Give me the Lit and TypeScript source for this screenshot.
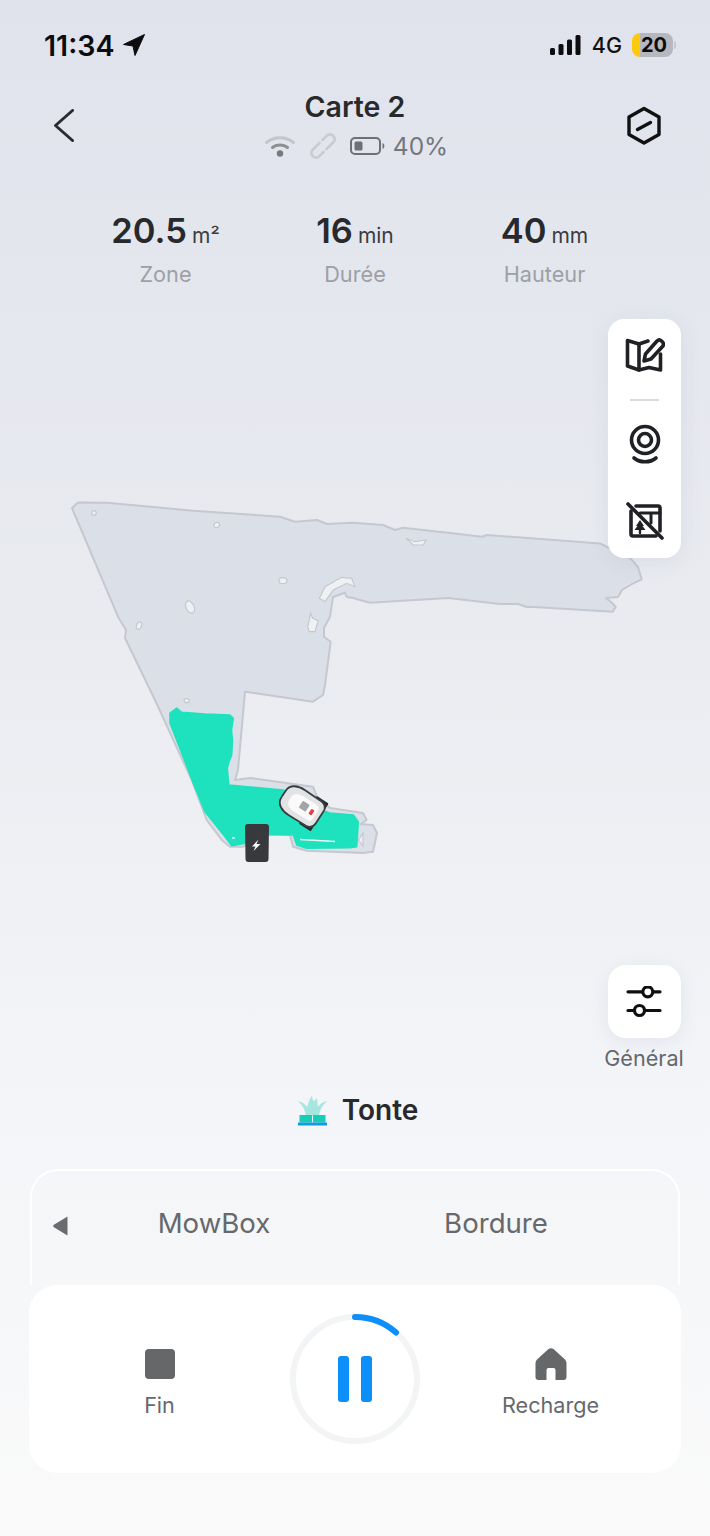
import { LitElement, html, css, svg } from "lit";
import { customElement } from "lit/decorators.js";

const outline = "M72 508 L78 502.5 L107 502.7 L193 510.7 L280 516.7 L295 521.7 L317 520 L327 524 L353 522.7 L383 525 L395 530 L403 527.7 L450 533 L482 536.7 L487 535 L600 543.5 L630 558 L638 567 L641.7 579.3 L632 584 L622 590 L618 597 L606 598 L612 603 L615.7 607 L612.7 611.7 L530 606.7 L526.7 607 L518 604 L500 604 L448 598 L370 602.7 L353 598 L346.7 597 L345 592.7 L333 597 L330 616.7 L324 628 L324 636.7 L330.7 641.7 L325 685 L323 695 L313 701.7 L245 691.7 L238 770 L235 780 L250 778 L313 786.7 L317 796.7 L330 808 L363 813 L366.7 820 L360.7 824 L373 825 L377 833 L373 851.7 L363 853 L306.7 850.7 L293 846.7 L290 835 L268 835 L243 846.7 L230 846.7 L221.7 840 L206.7 820 L191.7 780 L155 700 L125 638 L126 630 L118 616.7 Z";

const green = "M170 713 L176.7 708 L181.7 712.3 L205 714 L230 715 L233.3 718.3 L231.5 730 L232.5 740 L231.7 755 L229 762 L227.3 768.3 L228 776 L229 785 L283 790 L310 806 L330 813 L353.3 815 L358.3 821.7 L357.5 835 L356.7 846.7 L350 847.7 L306.7 848.3 L296.7 845 L293.3 835 L270 834.3 L246.7 843 L231.7 845.7 L225 836.7 L205 811.7 L193.3 783.3 L188.3 770 L170 723.3 Z";

const mapArt = svg`
  <path class="land" d=${outline}></path>
  <g class="hole">
    <ellipse cx="94" cy="513" rx="2.2" ry="2.4"></ellipse>
    <ellipse cx="216.7" cy="525" rx="3" ry="2.4" transform="rotate(-25 216.7 525)"></ellipse>
    <ellipse cx="283" cy="580.7" rx="4" ry="3"></ellipse>
    <ellipse cx="190" cy="607" rx="4" ry="6.5" transform="rotate(-25 190 607)"></ellipse>
    <ellipse cx="139" cy="625.7" rx="2.5" ry="3.8" transform="rotate(20 139 625.7)"></ellipse>
    <ellipse cx="186.7" cy="700.7" rx="2.6" ry="2"></ellipse>
    <path d="M319.3 598.3 L325 586.7 L341.7 577.3 L351.7 578.3 L355 586.7 L346.7 583.3 L333.3 590 L325 601.7 Z"></path>
    <path d="M310.7 613.3 L312.7 618.3 L318.3 620.7 L315 631.7 L309.3 631.7 L307.7 626.7 Z"></path>
    <path d="M406 538.3 L415 541.7 L426 540 L423.3 545 L413.3 545 Z"></path>
    <path d="M358.5 840 L363 833 L363 846 Z"></path>
  </g>
  <path class="mown" d=${green}></path>
  <path class="sliver" d="M300 839.5 L335 841.5"></path>
  <path class="sliver" d="M232 838 L235 838"></path>
  <g transform="translate(302 806) rotate(33)">
    <rect x="7" y="-16.5" width="14" height="33" rx="1" fill="#26282b"></rect>
    <path d="M-22 -4 C-22 -12 -14 -15 -6 -15 L14 -14.5 C19 -14 21 -11 21 -7 V7 C21 11 19 14 14 14.5 L-6 15 C-14 15 -22 12 -22 4 Z" fill="#e2e3e4" stroke="#3b3d40" stroke-width="1.8"></path>
    <path d="M-14 -2 C-14 -7 -9 -9 -4 -9 L12 -9 C15 -9 16 -7 16 -5 V5 C16 7 15 9 12 9 L-4 9 C-9 9 -14 7 -14 2 Z" fill="#fafafa"></path>
    <rect x="-2" y="-5" width="8" height="8" rx="1" fill="#a2a4a8"></rect>
    <rect x="9.5" y="-3" width="3.5" height="6" rx="1" fill="#e5403f"></rect>
  </g>
  <path d="M245 827 Q245 824 248 824 L266 824 Q269 824 269 827 L268.5 859 Q268.5 862 265.5 862 L248.5 862 Q245.5 862 245.5 859 Z" fill="#38393c"></path>
  <path d="M258.5 839.5 L252 846.5 L255.5 846.5 L253.5 851 L260.5 844 L256.5 844 Z" fill="#fff"></path>
`;

@customElement("app-root")
export class AppRoot extends LitElement {
  static styles = css`
    :host {
      display: flex;
      flex-direction: column;
      width: 710px;
      height: 1536px;
      overflow: hidden;
      font-family: Inter, "Liberation Sans", sans-serif;
      background: linear-gradient(180deg, #e0e3ec 0%, #e9ebf0 40%, #f3f5f8 72%, #fafafa 100%);
      color: #27292d;
    }
    svg { display: block; flex: none; }

    .status {
      height: 90px;
      display: flex;
      align-items: center;
      padding: 0 34px 0 44px;
      flex: none;
    }
    .time { font-size: 28.6px; font-weight: 600; color: #0d0d0f; }
    .loc { margin-left: 8px; }
    .status-right { margin-left: auto; display: flex; align-items: center; }
    .net { font-size: 21.5px; font-weight: 500; color: #111; margin-left: 11px; }
    .batt {
      margin-left: 10px;
      width: 41px;
      height: 24px;
      border-radius: 8px;
      background: linear-gradient(90deg, #fdc90e 0 8px, #b6b8bf 8px);
      font-size: 20px;
      font-weight: 700;
      color: #0c0c0c;
      text-align: center;
      line-height: 24px;
      padding-left: 3px;
      box-sizing: border-box;
    }
    .nub { width: 2px; height: 8px; background: #c6c8ce; border-radius: 0 2px 2px 0; margin-left: 1px; }

    .header {
      height: 77px;
      display: grid;
      grid-template-columns: 110px 1fr 110px;
      align-items: start;
      flex: none;
    }
    .back { margin: 19px 0 0 54px; }
    .hex { margin: 16px 0 0 26px; }
    .title { text-align: center; font-size: 28.5px; font-weight: 600; line-height: 34px; color: #27292d; }
    .sub {
      height: 40px;
      margin-top: 2px;
      display: flex;
      align-items: center;
      justify-content: center;
      color: #74777c;
      font-size: 24.5px;
      font-weight: 400;
      padding-left: 3px;
    }
    .sub .g1 { margin-right: 15px; }
    .sub .g2 { margin-right: 14px; }
    .sub .g3 { margin-right: 7px; }

    .stats {
      display: grid;
      grid-template-columns: repeat(3, 189.5px);
      justify-content: center;
      padding-top: 44px;
      height: 77px;
      flex: none;
    }
    .stat { text-align: center; }
    .val { height: 40px; line-height: 40px; white-space: nowrap; }
    .num { font-size: 34.5px; font-weight: 600; color: #27292d; }
    .unit { font-size: 21px; font-weight: 400; color: #3a3c40; margin-left: 5px; }
    .lab { margin-top: 9px; font-size: 21.7px; line-height: 28px; color: #9da0a6; }

    .map { position: relative; height: 802px; flex: none; }
    .land { fill: #dbdfe8; stroke: #c5c8ce; stroke-width: 2; stroke-linejoin: round; }
    .hole { fill: #eef0f3; stroke: #c5c8ce; stroke-width: 1.2; }
    .mown { fill: #1de2bd; stroke: #1de2bd; stroke-width: 1.5; stroke-linejoin: round; }
    .sliver { stroke: #f0f6f4; stroke-width: 1.4; fill: none; }

    .tools {
      position: absolute;
      top: 31px;
      left: 608px;
      width: 73px;
      height: 239px;
      background: #fff;
      border-radius: 16px;
      box-shadow: 0 4px 20px rgba(170, 176, 192, 0.22);
      display: flex;
      flex-direction: column;
      align-items: center;
    }
    .t1 { margin-top: 18px; }
    .sep { width: 29px; height: 1.5px; background: #d9dadd; margin-top: 26px; }
    .t2 { margin-top: 23px; }
    .t3 { margin-top: 38px; }

    .general {
      position: absolute;
      top: 677px;
      left: 598px;
      width: 92px;
      display: flex;
      flex-direction: column;
      align-items: center;
    }
    .gbtn {
      width: 73px;
      height: 73px;
      border-radius: 18px;
      background: #fff;
      box-shadow: 0 4px 18px rgba(170, 176, 192, 0.2);
      display: flex;
      align-items: center;
      justify-content: center;
    }
    .glabel { margin-top: 6px; font-size: 21.6px; line-height: 28px; color: #65686d; white-space: nowrap; }

    .mode {
      height: 40px;
      display: flex;
      align-items: center;
      justify-content: center;
      gap: 14px;
      font-size: 28px;
      font-weight: 600;
      flex: none;
      color: #27292d;
      padding-left: 5px;
    }

    .panel {
      margin: 39px 30px 0;
      height: 116px;
      box-sizing: border-box;
      border: 2px solid #fff;
      border-bottom: none;
      border-radius: 28px 28px 0 0;
      display: flex;
      align-items: flex-start;
      flex: none;
    }
    .tri { margin: 45px 5px 0 21px; }
    .tab { width: 282px; text-align: center; font-size: 27.6px; line-height: 32px; margin-top: 36px; color: #66686c; }

    .card {
      margin: 0 29px;
      height: 188px;
      background: #fff;
      border-radius: 28px;
      display: grid;
      grid-template-columns: 1fr 130px 1fr;
      align-items: center;
      flex: none;
    }
    .act {
      display: flex;
      flex-direction: column;
      align-items: center;
      gap: 11px;
      font-size: 21.6px;
      line-height: 28px;
      color: #66686c;
      padding-top: 8px;
    }
  `;

  render() {
    return html`
      <div class="status">
        <span class="time">11:34</span>
        <svg class="loc" width="22" height="22" viewBox="0 0 22 22"><path d="M0.5 10.5 L21.5 0.5 L12 21.5 L10 12 Z" fill="#0d0d0f" stroke="#0d0d0f" stroke-width="1" stroke-linejoin="round"></path></svg>
        <div class="status-right">
          <svg width="31" height="20" viewBox="0 0 31 20" fill="#0d0d0f">
            <rect x="0" y="13" width="5" height="7" rx="1.5"></rect>
            <rect x="8.5" y="9" width="5" height="11" rx="1.5"></rect>
            <rect x="17" y="4.5" width="5" height="15.5" rx="1.5"></rect>
            <rect x="25.5" y="0" width="5" height="20" rx="1.5"></rect>
          </svg>
          <span class="net">4G</span>
          <span class="batt">20</span>
          <span class="nub"></span>
        </div>
      </div>

      <div class="header">
        <svg class="back" width="20" height="33" viewBox="0 0 20 33" fill="none"><path d="M18.5 1.5 L1.5 16.5 L18.5 31.5" stroke="#2a2c30" stroke-width="3" stroke-linecap="round" stroke-linejoin="round"></path></svg>
        <div>
          <div class="title">Carte 2</div>
          <div class="sub">
            <svg class="g1" width="30" height="22" viewBox="0 0 30 22" fill="none">
              <path d="M1.5 7.5 C9 1 21 1 28.5 7.5" stroke="#c4c6ca" stroke-width="3" stroke-linecap="round"></path>
              <path d="M7.5 12.5 C11.5 9 18.5 9 22.5 12.5" stroke="#8d8f93" stroke-width="3" stroke-linecap="round"></path>
              <circle cx="15" cy="18.5" r="3.2" fill="#77797d"></circle>
            </svg>
            <svg class="g2" width="26" height="26" viewBox="0 0 26 26" fill="none" stroke="#c9ccd1" stroke-width="2.6" stroke-linecap="round" stroke-linejoin="round">
              <path d="M12.5 7 L17 2.5 C19 1 21.5 1.2 23.2 3 C25 4.8 25 7.2 23.5 9 L16.5 16"></path>
              <path d="M13.5 19 L9 23.5 C7 25 4.5 24.8 2.8 23 C1 21.2 1 18.8 2.5 17 L9.5 10"></path>
            </svg>
            <svg class="g3" width="36" height="18" viewBox="0 0 36 18" fill="none">
              <rect x="1" y="1" width="29" height="16" rx="4" stroke="#6d7075" stroke-width="2"></rect>
              <rect x="4.5" y="4.5" width="8" height="9" rx="1.5" fill="#6d7075"></rect>
              <path d="M32.5 6 C35 7 35 11 32.5 12 Z" fill="#6d7075"></path>
            </svg>
            <span>40%</span>
          </div>
        </div>
        <svg class="hex" width="36" height="40" viewBox="0 0 36 40" fill="none">
          <path d="M18 2.5 L33 11 V28.5 L18 37 L3 28.5 V11 Z" stroke="#111" stroke-width="3.4" stroke-linejoin="round"></path>
          <path d="M11.5 23.5 L24.5 16.5" stroke="#111" stroke-width="3.4" stroke-linecap="round"></path>
        </svg>
      </div>

      <div class="stats">
        <div class="stat"><div class="val"><span class="num">20.5</span><span class="unit">m²</span></div><div class="lab">Zone</div></div>
        <div class="stat"><div class="val"><span class="num">16</span><span class="unit">min</span></div><div class="lab">Durée</div></div>
        <div class="stat"><div class="val"><span class="num">40</span><span class="unit">mm</span></div><div class="lab">Hauteur</div></div>
      </div>

      <div class="map">
        <svg width="710" height="802" viewBox="0 288 710 802">${mapArt}</svg>

        <div class="tools">
          <svg class="t1" width="40" height="36" viewBox="0 0 40 36" fill="none" stroke="#1f2124" stroke-width="3.6" stroke-linejoin="round" stroke-linecap="round">
            <path d="M23 4 L14 7 L2.5 3.5 V29 L14 33 L24 30.5 L35.5 33 V17"></path>
            <path d="M14 7 V33"></path>
            <path d="M19 24 L20.5 17 L32 4 C33.5 2.5 35 2.5 36.5 4 L37.5 5 C38.8 6.5 38.8 8 37.5 9.5 L26 22 Z"></path>
          </svg>
          <div class="sep"></div>
          <svg class="t2" width="34" height="40" viewBox="0 0 34 40" fill="none" stroke="#1f2124" stroke-width="3.6" stroke-linecap="round">
            <circle cx="17" cy="16" r="13.5"></circle>
            <circle cx="17" cy="16" r="6.5"></circle>
            <path d="M6 34 C12 39 22 39 28 34"></path>
          </svg>
          <svg class="t3" width="38" height="38" viewBox="0 0 38 38" fill="none" stroke="#1f2124" stroke-width="3.6" stroke-linecap="round" stroke-linejoin="round">
            <path d="M5 9 V32 C5 33.5 5.5 34 7 34 H30"></path>
            <path d="M10 4 H32 C33.5 4 34 4.5 34 6 V29"></path>
            <path d="M14 11 H34 M25 11 V21" stroke-width="3"></path>
            <path d="M2 2 L36 36"></path>
            <path d="M14 18 L18 24 H16.5 L19.5 28 H8.5 L11.5 24 H10 Z" fill="#1f2124" stroke="none"></path>
            <path d="M14 27 V31" stroke-width="2.4"></path>
          </svg>
        </div>

        <div class="general">
          <div class="gbtn">
            <svg width="36" height="32" viewBox="0 0 36 32" fill="none" stroke="#0e0f10" stroke-width="3.2" stroke-linecap="round">
              <path d="M2 5.8 H16 M28 5.8 H34"></path>
              <circle cx="21.8" cy="5.8" r="5"></circle>
              <path d="M2 24.5 H8 M19.5 24.5 H34"></path>
              <circle cx="13.5" cy="24.5" r="5"></circle>
            </svg>
          </div>
          <div class="glabel">Général</div>
        </div>
      </div>

      <div class="mode">
        <svg width="31" height="31" viewBox="0 0 31 31">
          <g fill="#a5e6e0">
            <path d="M9 21 C8 14 5 9 0.5 6 C6 7 12 11 14 21 Z"></path>
            <path d="M22 21 C23 14 26 9 30.5 6 C25 7 19 11 17 21 Z"></path>
            <path d="M9.5 21 C9.5 12 12 5 15 0.5 C15.5 6 16.5 8 20 3 C21 11 21 16 21 21 Z"></path>
          </g>
          <rect x="2.5" y="20" width="12.5" height="7.5" fill="#16cdb8"></rect>
          <rect x="16" y="20" width="12.5" height="7.5" fill="#16cdb8"></rect>
          <rect x="1" y="27.5" width="29" height="3" fill="#0f9ce2"></rect>
        </svg>
        <span>Tonte</span>
      </div>

      <div class="panel">
        <svg class="tri" width="15" height="20" viewBox="0 0 15 20"><path d="M14.5 0.5 V19.5 L0.5 11 Q0 10 0.5 9 Z" fill="#6a6c70"></path></svg>
        <div class="tab">MowBox</div>
        <div class="tab">Bordure</div>
      </div>

      <div class="card">
        <div class="act">
          <svg width="30" height="32" viewBox="0 0 30 32"><rect x="0" y="1" width="30" height="30" rx="4" fill="#666769"></rect></svg>
          <span>Fin</span>
        </div>
        <svg width="130" height="130" viewBox="0 0 130 130" fill="none">
          <circle cx="65" cy="65" r="62" stroke="#f2f4f5" stroke-width="6"></circle>
          <path d="M65 3 A62 62 0 0 1 106 18.5" stroke="#0d8ffa" stroke-width="6" stroke-linecap="round"></path>
          <rect x="48" y="42" width="11" height="46" rx="3" fill="#0d8ffa"></rect>
          <rect x="71" y="42" width="11" height="46" rx="3" fill="#0d8ffa"></rect>
        </svg>
        <div class="act">
          <svg width="32" height="32" viewBox="0 0 32 32"><path fill-rule="evenodd" d="M13.5 1 Q16 -0.5 18.5 1 L30 11.5 Q31.5 13 31.5 15 V29 Q31.5 32 28.5 32 H3.5 Q0.5 32 0.5 29 V15 Q0.5 13 2 11.5 Z M11.5 32 H20.5 V22 Q20.5 20 18.5 20 H13.5 Q11.5 20 11.5 22 Z" fill="#666769"></path></svg>
          <span>Recharge</span>
        </div>
      </div>
    `;
  }
}
